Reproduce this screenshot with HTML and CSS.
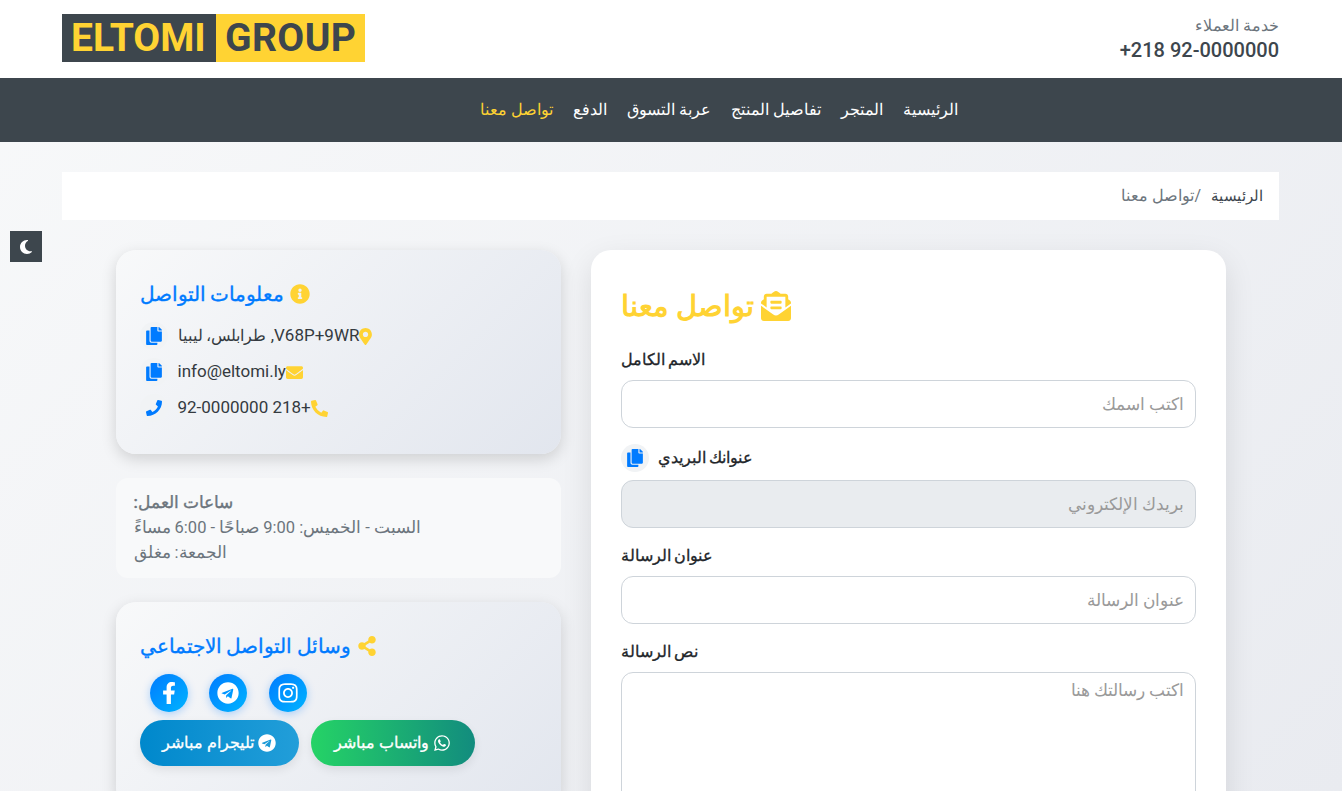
FILE: index.html
```html
<!DOCTYPE html>
<html lang="ar" dir="rtl">
<head>
<meta charset="utf-8">
<title>تواصل معنا</title>
<link rel="stylesheet" href="styles.css">
</head>
<body>
<header class="topbar">
  <div class="contact-head">
    <div class="contact-label">خدمة العملاء</div>
    <div class="contact-phone" dir="ltr">+218 92-0000000</div>
  </div>
  <a class="logo" dir="ltr"><span class="logo-a">ELTOMI</span><span class="logo-b">GROUP</span></a>
</header>
<nav class="nav">
  <a>الرئيسية</a><a>المتجر</a><a>تفاصيل المنتج</a><a>عربة التسوق</a><a>الدفع</a><a class="active">تواصل معنا</a>
</nav>
<button class="theme" aria-label="moon"><svg viewBox="0 0 384 512"><path d="M223.5 32C100 32 0 132.3 0 256S100 480 223.5 480c60.6 0 115.5-24.2 155.8-63.4c5-4.9 6.3-12.5 3.1-18.7s-10.1-9.7-17-8.5c-9.8 1.7-19.8 2.6-30.1 2.6c-96.9 0-175.5-78.8-175.5-176c0-65.8 36-123.1 89.3-153.3c6.1-3.5 9.2-10.5 7.7-17.3s-7.3-11.9-14.3-12.5c-6.3-.5-12.6-.8-19-.8z"/></svg></button>
<main class="page">
  <div class="crumbs"><span class="crumb-home">الرئيسية</span><span class="crumb-cur">/تواصل معنا</span></div>
  <div class="columns">
    <section class="form-card">
      <h2 class="form-title"><svg class="ic" viewBox="0 0 512 512"><path d="M176 216h160c8.84 0 16-7.16 16-16v-16c0-8.84-7.16-16-16-16H176c-8.84 0-16 7.16-16 16v16c0 8.84 7.16 16 16 16zm-16 80c0 8.84 7.16 16 16 16h160c8.84 0 16-7.16 16-16v-16c0-8.84-7.16-16-16-16H176c-8.84 0-16 7.16-16 16v16zm96 121.13c-16.42 0-32.84-5.06-46.86-15.19L0 250.86V464c0 26.51 21.49 48 48 48h416c26.51 0 48-21.49 48-48V250.86L302.86 401.94c-14.02 10.12-30.44 15.19-46.86 15.19zm237.61-254.18c-8.85-6.94-17.24-13.47-29.61-22.81V96c0-26.51-21.49-48-48-48h-77.55c-3.04-2.2-5.87-4.26-9.04-6.56C312.6 29.17 279.2-.35 256 0c-23.2-.35-56.59 29.17-73.41 41.44-3.17 2.3-6 4.36-9.04 6.56H96c-26.51 0-48 21.49-48 48v44.14c-12.37 9.33-20.76 15.87-29.61 22.81A47.995 47.995 0 0 0 0 200.72v10.65l96 69.35V96h320v184.72l96-69.35v-10.65c0-14.74-6.78-28.67-18.39-37.77z"/></svg>تواصل معنا</h2>
      <div class="field"><label class="lbl">الاسم الكامل</label><input class="inp" placeholder="اكتب اسمك"></div>
      <div class="field"><label class="lbl lbl-copy">عنوانك البريدي<span class="copy"><svg viewBox="0 0 448 512"><path d="M320 448v40c0 13.255-10.745 24-24 24H24c-13.255 0-24-10.745-24-24V120c0-13.255 10.745-24 24-24h72v296c0 30.879 25.121 56 56 56h168zm0-344V0H152c-13.255 0-24 10.745-24 24v368c0 13.255 10.745 24 24 24h272c13.255 0 24-10.745 24-24V128H344c-13.2 0-24-10.8-24-24zm120.971-31.029L375.029 7.029A24 24 0 0 0 358.059 0H352v96h96v-6.059a24 24 0 0 0-7.029-16.97z"/></svg></span></label><input class="inp" disabled placeholder="بريدك الإلكتروني"></div>
      <div class="field"><label class="lbl">عنوان الرسالة</label><input class="inp" placeholder="عنوان الرسالة"></div>
      <div class="field"><label class="lbl">نص الرسالة</label><textarea class="inp area" placeholder="اكتب رسالتك هنا"></textarea></div>
    </section>
    <aside class="side">
      <section class="glass info-card">
        <h3 class="side-title"><svg class="ic" viewBox="0 0 512 512"><path d="M256 8C119.043 8 8 119.083 8 256c0 136.997 111.043 248 248 248s248-111.003 248-248C504 119.083 392.957 8 256 8zm0 110c23.196 0 42 18.804 42 42s-18.804 42-42 42-42-18.804-42-42 18.804-42 42-42zm56 254c0 6.627-5.373 12-12 12h-88c-6.627 0-12-5.373-12-12v-24c0-6.627 5.373-12 12-12h12v-64h-12c-6.627 0-12-5.373-12-12v-24c0-6.627 5.373-12 12-12h64c6.627 0 12 5.373 12 12v100h12c6.627 0 12 5.373 12 12v24z"/></svg>معلومات التواصل</h3>
        <ul class="info-list">
          <li><svg class="ic pin" viewBox="0 0 384 512"><path d="M172.268 501.67C26.97 291.031 0 268.413 0 192 0 85.961 85.961 0 192 0s192 85.961 192 192c0 76.413-26.97 99.031-172.268 309.67-9.535 13.774-29.93 13.773-39.464 0zM192 272c44.183 0 80-35.817 80-80s-35.817-80-80-80-80 35.817-80 80 35.817 80 80 80z"/></svg><span>V68P+9WR, <span class="ar">طرابلس، ليبيا</span></span><span class="copy"><svg viewBox="0 0 448 512"><path d="M320 448v40c0 13.255-10.745 24-24 24H24c-13.255 0-24-10.745-24-24V120c0-13.255 10.745-24 24-24h72v296c0 30.879 25.121 56 56 56h168zm0-344V0H152c-13.255 0-24 10.745-24 24v368c0 13.255 10.745 24 24 24h272c13.255 0 24-10.745 24-24V128H344c-13.2 0-24-10.8-24-24zm120.971-31.029L375.029 7.029A24 24 0 0 0 358.059 0H352v96h96v-6.059a24 24 0 0 0-7.029-16.97z"/></svg></span></li>
          <li><svg class="ic mail" viewBox="0 0 512 512"><path d="M502.3 190.8c3.9-3.1 9.7-.2 9.7 4.7V400c0 26.5-21.5 48-48 48H48c-26.5 0-48-21.5-48-48V195.6c0-5 5.7-7.8 9.7-4.7 22.4 17.4 52.1 39.5 154.1 113.6 21.1 15.4 56.7 47.8 92.2 47.6 35.7.3 72-32.8 92.3-47.6 102-74.1 131.6-96.3 154-113.7zM256 320c23.2.4 56.6-29.2 73.4-41.4 132.7-96.3 142.8-104.7 173.4-128.7 5.8-4.5 9.2-11.5 9.2-18.9v-19c0-26.5-21.5-48-48-48H48C21.5 64 0 85.5 0 112v19c0 7.4 3.4 14.3 9.2 18.9 30.6 23.9 40.7 32.4 173.4 128.7 16.8 12.2 50.2 41.8 73.4 41.4z"/></svg><span>info@eltomi.ly</span><span class="copy"><svg viewBox="0 0 448 512"><path d="M320 448v40c0 13.255-10.745 24-24 24H24c-13.255 0-24-10.745-24-24V120c0-13.255 10.745-24 24-24h72v296c0 30.879 25.121 56 56 56h168zm0-344V0H152c-13.255 0-24 10.745-24 24v368c0 13.255 10.745 24 24 24h272c13.255 0 24-10.745 24-24V128H344c-13.2 0-24-10.8-24-24zm120.971-31.029L375.029 7.029A24 24 0 0 0 358.059 0H352v96h96v-6.059a24 24 0 0 0-7.029-16.97z"/></svg></span></li>
          <li><svg class="ic mail" viewBox="0 0 512 512"><path d="M497.39 361.8l-112-48a24 24 0 0 0-28 6.9l-49.6 60.6A370.66 370.66 0 0 1 130.6 204.11l60.6-49.6a23.94 23.94 0 0 0 6.9-28l-48-112A24.16 24.16 0 0 0 122.6.61l-104 24A24 24 0 0 0 0 48c0 256.5 207.9 464 464 464a24 24 0 0 0 23.4-18.6l24-104a24.29 24.29 0 0 0-14.01-27.6z"/></svg><span dir="rtl">+218 92-0000000</span><span class="copy"><svg viewBox="0 0 512 512"><path d="M493.4 24.6l-104-24c-11.3-2.6-22.9 3.3-27.5 13.9l-48 112c-4.2 9.8-1.4 21.3 6.9 28l60.6 49.6c-36 76.7-98.9 140.5-177.2 177.2l-49.6-60.6c-6.8-8.3-18.2-11.1-28-6.9l-112 48C3.9 366.5-2 378.1.6 389.4l24 104C27.1 504.2 36.7 512 48 512c256.1 0 464-207.5 464-464 0-11.2-7.7-20.9-18.6-23.4z"/></svg></span></li>
        </ul>
      </section>
      <section class="hours">
        <strong>ساعات العمل:</strong>
        <div>السبت - الخميس: 9:00 صباحًا - 6:00 مساءً</div>
        <div>الجمعة: مغلق</div>
      </section>
      <section class="glass social-card">
        <h3 class="side-title"><svg class="ic share" viewBox="0 0 448 512"><path d="M352 320c-22.608 0-43.387 7.819-59.79 20.895l-102.486-64.054a96.551 96.551 0 0 0 0-41.683l102.486-64.054C308.613 184.181 329.392 192 352 192c53.019 0 96-42.981 96-96S405.019 0 352 0s-96 42.981-96 96c0 7.158.79 14.13 2.276 20.841L155.79 180.895C139.387 167.819 118.608 160 96 160c-53.019 0-96 42.981-96 96s42.981 96 96 96c22.608 0 43.387-7.819 59.79-20.895l102.486 64.054A96.301 96.301 0 0 0 256 416c0 53.019 42.981 96 96 96s96-42.981 96-96-42.981-96-96-96z"/></svg>وسائل التواصل الاجتماعي</h3>
        <div class="socials">
          <a class="soc"><svg viewBox="0 0 448 512"><path d="M224.1 141c-63.6 0-114.9 51.3-114.9 114.9s51.3 114.9 114.9 114.9S339 319.5 339 255.9 287.7 141 224.1 141zm0 189.6c-41.1 0-74.7-33.5-74.7-74.7s33.5-74.7 74.7-74.7 74.7 33.5 74.7 74.7-33.6 74.7-74.7 74.7zm146.4-194.3c0 14.9-12 26.8-26.8 26.8-14.9 0-26.8-12-26.8-26.8s12-26.8 26.8-26.8 26.8 12 26.8 26.8zm76.1 27.2c-1.7-35.9-9.9-67.7-36.2-93.9-26.2-26.2-58-34.4-93.9-36.2-37-2.1-147.9-2.1-184.9 0-35.8 1.7-67.6 9.9-93.9 36.1s-34.4 58-36.2 93.9c-2.1 37-2.1 147.9 0 184.9 1.7 35.9 9.9 67.7 36.2 93.9s58 34.4 93.9 36.2c37 2.1 147.9 2.1 184.9 0 35.9-1.7 67.7-9.9 93.9-36.2 26.2-26.2 34.4-58 36.2-93.9 2.1-37 2.1-147.8 0-184.8zM398.8 388c-7.8 19.6-22.9 34.7-42.6 42.6-29.5 11.7-99.5 9-132.1 9s-102.7 2.6-132.1-9c-19.6-7.8-34.7-22.9-42.6-42.6-11.7-29.5-9-99.5-9-132.1s-2.6-102.7 9-132.1c7.8-19.6 22.9-34.7 42.6-42.6 29.5-11.7 99.5-9 132.1-9s102.7-2.6 132.1 9c19.6 7.8 34.7 22.9 42.6 42.6 11.7 29.5 9 99.5 9 132.1s2.7 102.7-9 132.1z"/></svg></a>
          <a class="soc"><svg viewBox="0 0 496 512"><path d="M248 8C111 8 0 119 0 256s111 248 248 248 248-111 248-248S385 8 248 8zm121.8 169.9l-40.7 191.8c-3 13.6-11.1 16.9-22.4 10.5l-62-45.7-29.9 28.8c-3.3 3.3-6.1 6.1-12.5 6.1l4.4-63.1 114.9-103.8c5-4.4-1.1-6.9-7.7-2.5l-142 89.4-61.2-19.1c-13.3-4.2-13.6-13.3 2.8-19.7l239.1-92.2c11.1-4 20.8 2.7 17.2 19.5z"/></svg></a>
          <a class="soc"><svg viewBox="0 0 320 512"><path d="M279.14 288l14.22-92.66h-88.91v-60.13c0-25.35 12.42-50.06 52.24-50.06h40.42V6.26S260.43 0 225.36 0c-73.22 0-121.08 44.38-121.08 124.72v70.62H22.89V288h81.39v224h100.17V288z"/></svg></a>
        </div>
        <div class="direct">
          <a class="pill pill-wa"><svg viewBox="0 0 448 512"><path d="M380.9 97.1C339 55.1 283.2 32 223.9 32c-122.4 0-222 99.6-222 222 0 39.1 10.2 77.3 29.6 111L0 480l117.7-30.9c32.4 17.7 68.9 27 106.1 27h.1c122.3 0 224.1-99.6 224.1-222 0-59.3-25.2-115-67.1-157zm-157 341.6c-33.2 0-65.7-8.9-94-25.7l-6.7-4-69.8 18.3L72 359.2l-4.4-7c-18.5-29.4-28.2-63.3-28.2-98.2 0-101.7 82.8-184.5 184.6-184.5 49.3 0 95.6 19.2 130.4 54.1 34.8 34.9 56.2 81.2 56.1 130.5 0 101.8-84.9 184.6-186.6 184.6zm101.2-138.2c-5.5-2.8-32.8-16.2-37.9-18-5.1-1.9-8.8-2.8-12.5 2.8-3.7 5.6-14.3 18-17.6 21.8-3.2 3.7-6.5 4.2-12 1.4-32.6-16.3-54-29.1-75.5-66-5.7-9.8 5.7-9.1 16.3-30.3 1.8-3.7.9-6.9-.5-9.7-1.4-2.8-12.5-30.1-17.1-41.2-4.5-10.8-9.1-9.3-12.5-9.5-3.2-.2-6.9-.2-10.6-.2-3.7 0-9.7 1.4-14.8 6.9-5.1 5.6-19.4 19-19.4 46.3 0 27.3 19.9 53.7 22.6 57.4 2.8 3.7 39.1 59.7 94.8 83.8 35.2 15.2 49 16.5 66.6 13.9 10.7-1.6 32.8-13.4 37.4-26.4 4.6-13 4.6-24.1 3.2-26.4-1.3-2.5-5-3.9-10.5-6.6z"/></svg>واتساب مباشر</a>
          <a class="pill pill-tg"><svg viewBox="0 0 496 512"><path d="M248 8C111 8 0 119 0 256s111 248 248 248 248-111 248-248S385 8 248 8zm121.8 169.9l-40.7 191.8c-3 13.6-11.1 16.9-22.4 10.5l-62-45.7-29.9 28.8c-3.3 3.3-6.1 6.1-12.5 6.1l4.4-63.1 114.9-103.8c5-4.4-1.1-6.9-7.7-2.5l-142 89.4-61.2-19.1c-13.3-4.2-13.6-13.3 2.8-19.7l239.1-92.2c11.1-4 20.8 2.7 17.2 19.5z"/></svg>تليجرام مباشر</a>
        </div>
      </section>
    </aside>
  </div>
</main>
</body>
</html>
```
FILE: styles.css
```css
* { box-sizing: border-box; }
html, body { height: 100%; overflow: hidden; }
body {
  margin: 0;
  font-family: Roboto, sans-serif;
  font-size: 16px;
  line-height: 1.5;
  color: #212529;
  background: linear-gradient(135deg, #f8f9fa 0%, #e9ebf0 100%);
}
.topbar {
  height: 78px;
  background: #fff;
  display: flex;
  justify-content: space-between;
  align-items: center;
  padding: 0 63px 0 62px;
}
.contact-head { display: flex; flex-direction: column; }
.contact-label { font-size: 15.6px; line-height: 21px; color: #6c757d; margin-top: 2px; margin-bottom: -1px; }
.contact-phone { font-size: 20px; line-height: 28px; font-weight: 500; color: #3d464d; }
.logo { display: flex; height: 48px; margin-bottom: 2px; font-size: 39px; font-weight: 700; line-height: 48px; }
.logo-a { background: #3d464d; color: #ffd333; width: 154px; padding-left: 9px; }
.logo-b { background: #ffd333; color: #3d464d; width: 149px; padding-left: 9px; letter-spacing: .4px; }
.nav {
  height: 64px;
  background: #3d464d;
  display: flex;
  justify-content: center;
  align-items: center;
  gap: 20px;
  padding-left: 96px;
  color: #fff;
  font-size: 16px;
}
.nav .active { color: #ffd333; }
.theme {
  position: fixed;
  left: 10px;
  top: 231px;
  width: 32px;
  height: 31px;
  border: 0;
  padding: 0;
  background: #3d464d;
  display: flex;
  align-items: center;
  justify-content: center;
}
.theme svg { width: 14px; height: 16px; fill: #fff; }
.page { padding: 30px 63px 0 62px; }
.crumbs {
  height: 48px;
  background: #fff;
  display: flex;
  align-items: center;
  padding: 0 16px;
  gap: 10px;
}
.crumb-home { color: #3d464d; font-size: 15px; }
.crumb-cur { color: #6c757d; font-size: 16px; }
.columns {
  width: 1110px;
  margin: 30px auto 0;
  display: flex;
  gap: 30px;
  align-items: flex-start;
}
.form-card {
  width: 635px;
  flex: none;
  background: #fff;
  border-radius: 20px;
  box-shadow: 0 10px 30px rgba(0, 0, 0, .1);
  padding: 30px;
}
.ic { fill: #ffd333; flex: none; }
.form-title {
  margin: 0 0 16px;
  font-size: 29px;
  line-height: 52px;
  font-weight: 700;
  color: #ffd333;
  display: flex;
  align-items: center;
  justify-content: flex-end;
  gap: 7px;
}
.form-title .ic { width: 30px; height: 30px; }
.field { margin-bottom: 16px; }
.lbl { display: block; text-align: left; font-size: 16px; font-weight: 500; -webkit-text-stroke: .3px currentColor; line-height: 24px; margin-bottom: 8px; }
.lbl-copy { display: flex; justify-content: flex-end; align-items: center; gap: 9px; height: 28px; }
.inp {
  display: block;
  width: 100%;
  height: 48px;
  border: 1px solid #ced4da;
  border-radius: 12px;
  background: #fff;
  padding: 0 10px 0 12px;
  font: inherit;
  font-size: 16.5px;
  outline: 0;
}
.inp::placeholder { color: #9a9a9a; opacity: 1; }
.inp:disabled { background: #e9ecef; }
.area { height: 200px; padding-top: 6px; resize: none; }
.copy {
  width: 28px;
  height: 28px;
  border-radius: 50%;
  background: #f1f3f5;
  display: inline-flex;
  align-items: center;
  justify-content: center;
  flex: none;
}
.copy svg { width: 16px; height: 18px; fill: #007bff; }
.side { width: 445px; flex: none; display: flex; flex-direction: column; gap: 24px; }
.glass {
  border-radius: 20px;
  background: linear-gradient(135deg, #f8f9fa 0%, #e2e6ee 100%);
  box-shadow: 0 5px 15px rgba(0, 0, 0, .15);
  padding: 24px;
}
.info-card { height: 204px; }
.social-card { height: 205px; }
.side-title {
  margin: 0;
  font-size: 20px;
  font-weight: 500;
  -webkit-text-stroke: .35px currentColor;
  line-height: 40px;
  color: #007bff;
  display: flex;
  align-items: center;
  justify-content: flex-end;
  gap: 6px;
}
.side-title .ic { width: 20px; height: 20px; }
.info-list { list-style: none; margin: 8px 0 0; padding: 0; display: flex; flex-direction: column; gap: 8px; color: #343a40; }
.info-list li { display: flex; align-items: center; justify-content: flex-end; height: 28px; font-size: 17px; }
.info-list li .copy { margin-right: 10px; }
.info-list .ar { font-size: 16px; }
.info-list .pin { width: 13px; height: 17px; }
.info-list .mail { width: 17px; height: 17px; }
.hours {
  height: 100px;
  background: #f8f9fa;
  border-radius: 12px;
  padding: 12px 18px;
  color: #6c757d;
  font-size: 16.5px;
  line-height: 25px;
  text-align: left;
}
.hours strong { font-weight: 500; -webkit-text-stroke: .35px currentColor; }
.socials { display: flex; justify-content: flex-end; gap: 21.5px; padding-left: 10px; margin-top: 8px; }
.soc {
  width: 38px;
  height: 38px;
  border-radius: 50%;
  background: linear-gradient(135deg, #007bff, #00b4ff);
  box-shadow: 0 2px 8px rgba(0, 123, 255, .3);
  display: flex;
  align-items: center;
  justify-content: center;
}
.soc svg { height: 22px; width: 22px; fill: #fff; }
.direct { display: flex; justify-content: flex-end; gap: 12px; margin-top: 8px; }
.pill {
  height: 46px;
  border-radius: 23px;
  color: #fff;
  font-weight: 500;
  -webkit-text-stroke: .3px currentColor;
  font-size: 16.3px;
  display: flex;
  align-items: center;
  justify-content: center;
  gap: 4px;
  box-shadow: 0 4px 10px rgba(0, 0, 0, .08);
}
.pill svg { width: 18px; height: 18px; fill: #fff; }
.pill-wa { width: 164px; background: linear-gradient(90deg, #25d366, #128c7e); }
.pill-tg { width: 159px; background: linear-gradient(90deg, #0088cc, #229ed9); }
```
